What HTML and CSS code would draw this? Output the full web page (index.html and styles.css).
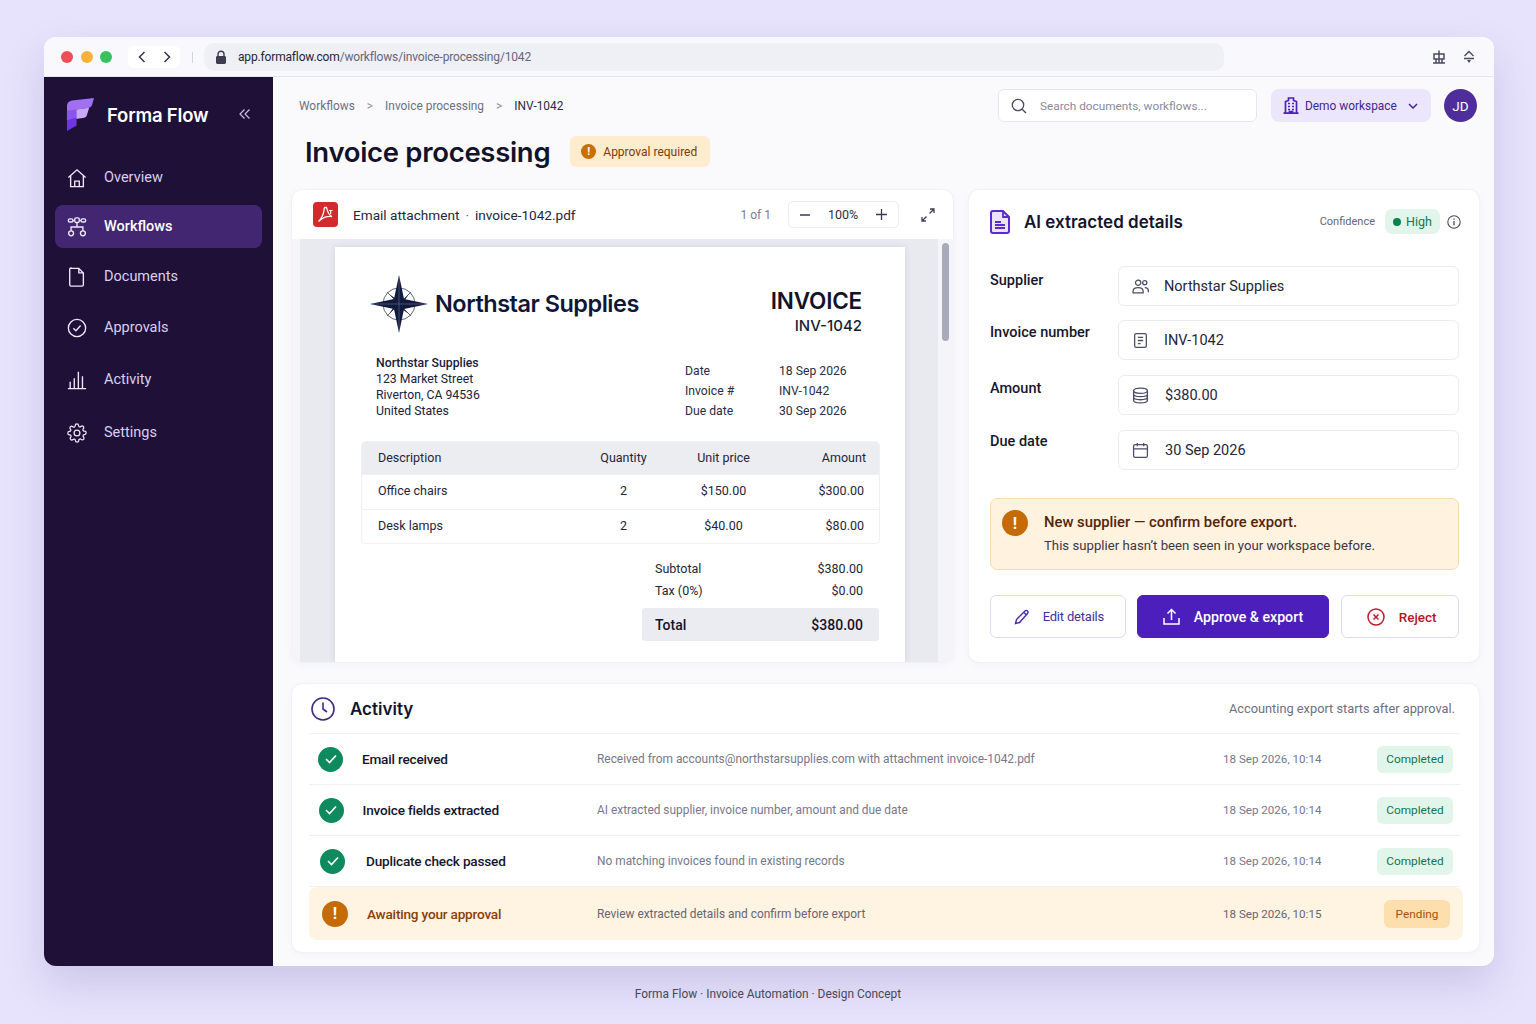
FILE: index.html
```html
<!DOCTYPE html>
<html lang="en">
<head>
<meta charset="utf-8">
<title>Forma Flow</title>
<link rel="stylesheet" href="styles.css">
</head>
<body>
<div class="window">
  <div class="titlebar">
    <div class="dots"><span class="dot red"></span><span class="dot yellow"></span><span class="dot green"></span></div>
    <div class="navbtns">
      <svg width="10" height="14" viewBox="0 0 10 14"><path d="M7.500 2 2.500 7l5 5" class="s" stroke="#34344a"/></svg>
      <svg width="10" height="14" viewBox="0 0 10 14"><path d="M2.500 2l5 5-5 5" class="s" stroke="#34344a"/></svg>
    </div>
    <span class="tb-div"></span>
    <div class="address">
      <svg width="12" height="14" viewBox="0 0 12 14"><path d="M3 6V4.200a3 3 0 0 1 6 0V6" fill="none" stroke="#3d3d52" stroke-width="1.400"/><rect x="1" y="6" width="10" height="8" rx="1.400" fill="#3d3d52"/></svg>
      <span class="url"><b>app.formaflow.com</b>/workflows/invoice-processing/1042</span>
    </div>
    <div class="tb-icons">
      <svg width="14" height="14" viewBox="0 0 14 14"><path d="M2 4h10v5H2zM7 .5V13.500M4 9v4M10 9v4M1 13h12" fill="none" stroke="#4a4a60" stroke-width="1.500"/></svg>
      <svg width="14" height="14" viewBox="0 0 14 14"><path d="M2.500 6 7 1.500 11.500 6M2 8.500h10" fill="none" stroke="#4a4a60" stroke-width="1.400"/><path d="M5 10h4l-2 3z" fill="#4a4a60"/></svg>
    </div>
  </div>
  <div class="app">
    <aside class="sidebar">
      <div class="brand">
        <svg width="29" height="33" viewBox="0 0 30 34">
          <path d="M1 8c0-3 2-5 5-5.500L29 0l-2 7c-.5 2-2 3-4 3.200L1 13z" fill="#a06ff2"/>
          <path d="M1 13l23-3-2.500 8c-.5 1.500-2 2.500-4 2.700L1 23z" fill="#c8a8f8"/>
          <path d="M1 19l10 1v8.500L1 34z" fill="#6e35e0"/>
          <path d="M1 13l10-1.300V20L1 23z" fill="#8a55ea"/>
        </svg>
        <span class="brand-name">Forma Flow</span>
        <svg class="collapse" width="12" height="12" viewBox="0 0 12 12"><path d="M5.500 1.500 1 6l4.500 4.500M10.500 1.500 6 6l4.500 4.500" fill="none" stroke="#c9bfe0" stroke-width="1.200"/></svg>
      </div>
      <nav class="nav">
        <a class="nav-item n1">
          <svg class="nav-ic" viewBox="0 0 22 22"><path d="M1.500 10.500 11 2l9.500 8.500M4 8.500v12h14v-12M8.500 20.500v-6h5v6"/></svg><span>Overview</span>
        </a>
        <a class="nav-item active n2">
          <svg class="nav-ic" viewBox="0 0 22 22"><rect x="1.500" y="2" width="5" height="3.500" rx="1.500"/><rect x="8.500" y="1" width="5" height="5" rx="1.500"/><rect x="15.500" y="2" width="5" height="3.500" rx="1.500"/><path d="M6.500 4h2M13.500 4h2M11 6v5M4.500 15.500V11h13v4.500"/><circle cx="4.500" cy="18" r="2.700"/><circle cx="17.500" cy="18" r="2.700"/></svg><span>Workflows</span>
        </a>
        <a class="nav-item n3">
          <svg class="nav-ic" viewBox="0 0 22 22"><path d="M4.500 1.500h8.500l5 5v13a1.500 1.500 0 0 1-1.500 1.500h-12a1.500 1.500 0 0 1-1.500-1.500v-17a1.500 1.500 0 0 1 1.500-1.500zM13 1.500v5h5"/></svg><span>Documents</span>
        </a>
        <a class="nav-item n4">
          <svg class="nav-ic" viewBox="0 0 22 22"><circle cx="11" cy="11" r="9.500"/><path d="M7 11.300l2.800 2.700L15 8.300"/></svg><span>Approvals</span>
        </a>
        <a class="nav-item n5">
          <svg class="nav-ic" viewBox="0 0 22 22"><path d="M1 20.500h20M3.500 20.500V13M8 20.500V9M12.500 20.500V2M17 20.500V7"/></svg><span>Activity</span>
        </a>
        <a class="nav-item n6">
          <svg class="nav-ic" viewBox="0 0 24 24"><circle cx="12" cy="12" r="3.500"/><path d="M19.400 15a1.650 1.650 0 0 0 .33 1.820l.06.06a2 2 0 1 1-2.830 2.830l-.06-.06a1.650 1.650 0 0 0-2.800 1.170V21a2 2 0 0 1-4 0v-.09a1.650 1.650 0 0 0-2.800-1.120l-.06.06a2 2 0 1 1-2.830-2.830l.06-.06a1.650 1.650 0 0 0-1.170-2.800H3a2 2 0 0 1 0-4h.09a1.650 1.650 0 0 0 1.120-2.800l-.06-.06a2 2 0 1 1 2.830-2.830l.06.06a1.650 1.650 0 0 0 2.800-1.170V3a2 2 0 0 1 4 0v.09a1.650 1.650 0 0 0 2.800 1.120l.06-.06a2 2 0 1 1 2.830 2.830l-.06.06a1.650 1.650 0 0 0 1.170 2.800H21a2 2 0 0 1 0 4h-.09a1.650 1.650 0 0 0-1.510 1z"/></svg><span>Settings</span>
        </a>
      </nav>
    </aside>
    <main class="main">
      <header class="topbar">
        <div class="crumbs"><span>Workflows</span><i>&gt;</i><span>Invoice processing</span><i>&gt;</i><span class="cur">INV-1042</span></div>
        <div class="search">
          <svg width="16" height="16" viewBox="0 0 16 16"><circle cx="7" cy="7" r="5.700" fill="none" stroke="#4a4a5e" stroke-width="1.300"/><path d="M11.200 11.200 15 15" stroke="#4a4a5e" stroke-width="1.300"/></svg>
          <span>Search documents, workflows...</span>
        </div>
        <div class="workspace">
          <svg width="16" height="17" viewBox="0 0 16 17"><path d="M2.500 16V4.500l3-1V1h5v2.500l3 1V16M0.500 16.200h15M5 6.500h2M9 6.500h2M5 9.500h2M9 9.500h2M5 12.500h2M9 12.500h2M6.500 16v-1.500h3V16" fill="none" stroke="#4a22b5" stroke-width="1.700"/></svg>
          <span>Demo workspace</span>
          <svg width="10" height="6" viewBox="0 0 10 6"><path d="M1 1l4 4 4-4" fill="none" stroke="#41268e" stroke-width="1.500"/></svg>
        </div>
        <div class="avatar">JD</div>
      </header>
      <div class="title-row">
        <h1>Invoice processing</h1>
        <div class="approval"><span class="warn-mini">!</span>Approval required</div>
      </div>
      <div class="content">
        <section class="card viewer-card">
          <div class="viewer-head">
            <span class="pdf"><svg width="17" height="17" viewBox="0 0 17 17"><path d="M1.500 15.500C4 13 6.500 9 7 4c.2-1.500 0-2.500 1-2.500h1.500C10.500 5 11 9 15 10.500 11 10 6 11 1.500 15.500z" fill="none" stroke="#fff" stroke-width="1.300"/><path d="M12 4.500h3.500M13.700 4.500V8" stroke="#fff" stroke-width="1.100"/></svg></span>
            <span class="file">Email attachment<i>·</i>invoice-1042.pdf</span>
            <span class="pages">1 of 1</span>
            <div class="zoomer">
              <svg width="10" height="10" viewBox="0 0 10 10"><path d="M0 5h10" stroke="#3a3a4e" stroke-width="1.300"/></svg>
              <span>100%</span>
              <svg width="11" height="11" viewBox="0 0 11 11"><path d="M0 5.500h11M5.500 0v11" stroke="#3a3a4e" stroke-width="1.300"/></svg>
            </div>
            <svg class="expand" width="14" height="14" viewBox="0 0 14 14"><path d="M8.500 5.500 13 1M9 1h4v4M5.500 8.500 1 13M1 9v4h4" fill="none" stroke="#3f3f58" stroke-width="1.300"/></svg>
          </div>
          <div class="viewer">
            <div class="canvas">
              <div class="page">
                <div class="doc-top">
                  <div class="logo">
                    <svg width="58" height="58" viewBox="0 0 58 58">
                      <circle cx="29" cy="29" r="16" fill="none" stroke="#5f6580" stroke-width="1"/>
                      <path d="M29 29 17 17M29 29l12-12M29 29 17 41M29 29l12 12" stroke="#5f6580" stroke-width="1"/>
                      <path d="M29 29l10-10-5.500 8zM29 29l-10 10 5.500-8zM29 29 19 19l8 5.500zM29 29l10 10-8-5.500z" fill="#111a3e"/>
                      <path d="M29 0l5 24-5 5-5-5zM29 58l-5-24 5-5 5 5zM0 29l24-5 5 5-5 5zM58 29l-24 5-5-5 5-5z" fill="#111a3e"/>
                      <path d="M29 3v52M3 29h52" stroke="#fff" stroke-width=".4" opacity=".6"/>
                    </svg>
                    <span class="logo-name">Northstar Supplies</span>
                  </div>
                  <div class="inv-head"><strong>INVOICE</strong><span>INV-1042</span></div>
                </div>
                <div class="doc-meta">
                  <div class="addr"><b>Northstar Supplies</b><span>123 Market Street</span><span>Riverton, CA 94536</span><span>United States</span></div>
                  <dl class="facts">
                    <dt>Date</dt><dd>18 Sep 2026</dd>
                    <dt>Invoice #</dt><dd>INV-1042</dd>
                    <dt>Due date</dt><dd>30 Sep 2026</dd>
                  </dl>
                </div>
                <div class="items">
                  <div class="tr th"><span>Description</span><span class="c">Quantity</span><span class="c">Unit price</span><span class="r">Amount</span></div>
                  <div class="tr"><span>Office chairs</span><span class="c">2</span><span class="c">$150.00</span><span class="r">$300.00</span></div>
                  <div class="tr last"><span>Desk lamps</span><span class="c">2</span><span class="c">$40.00</span><span class="r">$80.00</span></div>
                </div>
                <div class="totals">
                  <div class="tot"><span>Subtotal</span><span>$380.00</span></div>
                  <div class="tot"><span>Tax (0%)</span><span>$0.00</span></div>
                  <div class="tot grand"><span>Total</span><span>$380.00</span></div>
                </div>
              </div>
            </div>
            <div class="track"><div class="thumb"></div></div>
          </div>
        </section>
        <section class="card details">
          <div class="details-head">
            <svg width="20" height="24" viewBox="0 0 20 24"><path d="M3 1h10l6 6v14a2 2 0 0 1-2 2H3a2 2 0 0 1-2-2V3a2 2 0 0 1 2-2z" fill="#ece4fb" stroke="#5a2bd0" stroke-width="2"/><path d="M13 1v6h6M5 12h6M5 15h10M5 18h10" fill="none" stroke="#5a2bd0" stroke-width="1.800"/></svg>
            <h2>AI extracted details</h2>
            <span class="conf">Confidence</span>
            <span class="high"><i></i>High</span>
            <svg width="14" height="14" viewBox="0 0 14 14"><circle cx="7" cy="7" r="6.200" fill="none" stroke="#4a4a5e" stroke-width="1.100"/><path d="M7 6v4.200M7 3.500v1.300" stroke="#4a4a5e" stroke-width="1.300"/></svg>
          </div>
          <div class="fields">
            <div class="field f1"><label>Supplier</label><div class="input">
              <svg viewBox="0 0 16 16"><circle cx="5.800" cy="4.500" r="2.500"/><circle cx="12" cy="4.500" r="2"/><path d="M1 14v-1.500c0-2 2-3.500 4.800-3.500s4.700 1.500 4.700 3.500V14zM12 9c2 0 3.400 1.200 3.400 3v1.500"/></svg>
              <span>Northstar Supplies</span></div></div>
            <div class="field f2"><label>Invoice number</label><div class="input">
              <svg viewBox="0 0 16 16"><rect x="2.500" y="1.500" width="11" height="13" rx="1.500"/><path d="M5.500 5h5M5.500 8h5M5.500 11h2.500"/></svg>
              <span>INV-1042</span></div></div>
            <div class="field f3"><label>Amount</label><div class="input wide">
              <svg viewBox="0 0 16 16"><ellipse cx="8" cy="3.500" rx="6.500" ry="2.500"/><path d="M1.500 3.500v9c0 1.400 3 2.500 6.500 2.500s6.500-1.100 6.500-2.500v-9M1.500 6.500c0 1.400 3 2.500 6.500 2.500s6.500-1.100 6.500-2.500M1.500 9.500c0 1.400 3 2.500 6.500 2.500s6.500-1.100 6.500-2.500"/></svg>
              <span>$380.00</span></div></div>
            <div class="field f4"><label>Due date</label><div class="input wide">
              <svg viewBox="0 0 16 16"><rect x="1.500" y="2.500" width="13" height="12" rx="1.500"/><path d="M1.500 6.500h13M5 1v3M11 1v3"/></svg>
              <span>30 Sep 2026</span></div></div>
          </div>
          <div class="alert">
            <span class="warn big">!</span>
            <div class="alert-text"><strong>New supplier — confirm before export.</strong><span>This supplier hasn’t been seen in your workspace before.</span></div>
          </div>
          <div class="actions">
            <button class="btn edit"><svg width="16" height="16" viewBox="0 0 16 16"><path d="M1.500 14.500l1-4L11 2c.8-.8 1.800-.8 2.500 0s.8 1.700 0 2.500L5.500 13.500zM10 3.500l2.500 2.500" fill="none" stroke="#4a2aa8" stroke-width="1.400"/></svg>Edit details</button>
            <button class="btn approve"><svg width="17" height="17" viewBox="0 0 17 17"><path d="M8.500 12V1.500M4.500 5.500l4-4 4 4M1 10v6h15v-6" fill="none" stroke="#fff" stroke-width="1.500"/></svg>Approve &amp; export</button>
            <button class="btn reject"><svg width="18" height="18" viewBox="0 0 18 18"><circle cx="9" cy="9" r="8" fill="none" stroke="#c0182c" stroke-width="1.500"/><path d="M6.500 6.500l5 5M11.500 6.500l-5 5" stroke="#c0182c" stroke-width="1.500"/></svg>Reject</button>
          </div>
        </section>
      </div>
      <section class="card activity">
        <div class="act-head">
          <svg width="24" height="24" viewBox="0 0 24 24"><circle cx="12" cy="12" r="11" fill="none" stroke="#3e2a80" stroke-width="1.600"/><path d="M12 5.500V12l4 3" fill="none" stroke="#3e2a80" stroke-width="1.600"/></svg>
          <h2>Activity</h2>
          <span>Accounting export starts after approval.</span>
        </div>
        <div class="row r1">
          <div class="who"><span class="ok"><svg width="12" height="10" viewBox="0 0 12 10"><path d="M1 5l3.500 3.500L11 1.500" fill="none" stroke="#fff" stroke-width="1.600"/></svg></span><b>Email received</b></div>
          <span class="desc">Received from accounts@northstarsupplies.com with attachment invoice-1042.pdf</span>
          <span class="time">18 Sep 2026, 10:14</span>
          <span class="pill done">Completed</span>
        </div>
        <div class="row r2">
          <div class="who"><span class="ok"><svg width="12" height="10" viewBox="0 0 12 10"><path d="M1 5l3.500 3.500L11 1.500" fill="none" stroke="#fff" stroke-width="1.600"/></svg></span><b>Invoice fields extracted</b></div>
          <span class="desc">AI extracted supplier, invoice number, amount and due date</span>
          <span class="time">18 Sep 2026, 10:14</span>
          <span class="pill done">Completed</span>
        </div>
        <div class="row r3">
          <div class="who"><span class="ok"><svg width="12" height="10" viewBox="0 0 12 10"><path d="M1 5l3.500 3.500L11 1.500" fill="none" stroke="#fff" stroke-width="1.600"/></svg></span><b>Duplicate check passed</b></div>
          <span class="desc">No matching invoices found in existing records</span>
          <span class="time">18 Sep 2026, 10:14</span>
          <span class="pill done">Completed</span>
        </div>
        <div class="row r4">
          <div class="who"><span class="warn">!</span><b>Awaiting your approval</b></div>
          <span class="desc">Review extracted details and confirm before export</span>
          <span class="time">18 Sep 2026, 10:15</span>
          <span class="pill pending">Pending</span>
        </div>
      </section>
    </main>
  </div>
</div>
<footer class="foot">Forma Flow · Invoice Automation · Design Concept</footer>
</body>
</html>
```
FILE: styles.css
```css
* { box-sizing: border-box; }
html, body { margin: 0; height: 1024px; }
body {
  background: #e7e3fc;
  font-family: Roboto, "Liberation Sans", sans-serif;
  color: #15152b;
  padding: 37px 42px 0 44px;
  overflow: hidden;
}
.s { fill: none; stroke-width: 1.500; }
.window {
  width: 1450px; height: 929px;
  border-radius: 12px; overflow: hidden;
  background: #fafafd;
  box-shadow: 0 18px 40px rgba(80, 64, 140, .18);
  display: flex; flex-direction: column;
}
.titlebar {
  height: 40px; flex: none;
  background: #f9f9fd; border-bottom: 1px solid #e5e5ec;
  display: flex; align-items: center; padding: 1px 17px 0;
}
.dots { display: flex; gap: 7.500px; }
.dot { width: 12px; height: 12px; border-radius: 50%; }
.red { background: #ee4f56; } .yellow { background: #f8b23c; } .green { background: #38c25e; }
.navbtns {
  margin-left: 16px; width: 52px; height: 22px; background: #fff; border-radius: 6px;
  display: flex; align-items: center; justify-content: space-between; padding: 0 8px 0 9px;
}
.tb-div { width: 1px; height: 11px; background: #d4d4dc; margin-left: 12px; }
.address {
  margin-left: 11px; width: 1020px; height: 28px; border-radius: 10px;
  background: #efeff6; display: flex; align-items: center; padding-left: 11px; gap: 11px;
  font-size: 12px; letter-spacing: -.16px; color: #66667a;
}
.url b { font-weight: 400; color: #25253a; }
.tb-icons { margin-left: auto; margin-right: 1px; display: flex; gap: 16px; }
.app { flex: 1; display: flex; min-height: 0; }

.sidebar { width: 229px; background: #1f1037; flex: none; padding: 0 11px; }
.brand { display: flex; align-items: center; height: 70px; padding: 4px 0 0 11px; margin-bottom: 9px; position: relative; }
.brand-name { font-family: Inter, Roboto, sans-serif; font-weight: 600; font-size: 18.500px; color: #fff; margin: 1px 0 0 12px; letter-spacing: -.2px; }
.collapse { margin-left: 31px; }
.nav { display: flex; flex-direction: column; }
.nav-item {
  height: 43px; display: flex; align-items: center; gap: 17px;
  padding-left: 12px; border-radius: 8px;
  color: #d8cfee; font-size: 14.500px;
}
.nav-item.n2 { margin-top: 6px; } .nav-item.n3 { margin-top: 7px; }
.nav-item.n4 { margin-top: 8px; } .nav-item.n5 { margin-top: 9px; } .nav-item.n6 { margin-top: 10px; }
.nav-item.active { background: #432672; color: #fff; font-weight: 500; }
.nav-ic { width: 20px; height: 20px; fill: none; stroke: #eee8fa; stroke-width: 1.500; flex: none; }

.main { flex: 1; min-width: 0; padding: 12px 15px 0 19px; display: flex; flex-direction: column; }
.topbar { display: flex; align-items: center; height: 33px; }
.crumbs { display: flex; align-items: center; padding-left: 7px; font-size: 11.900px; color: #6f6f82; }
.crumbs i { font-style: normal; margin: 0 12px; font-size: 12px; color: #8f8fa0; }
.crumbs .cur { color: #2a2a3e; }
.search {
  margin-left: auto; width: 259px; height: 33px; background: #fff;
  border: 1px solid #e6e6ee; border-radius: 6px;
  display: flex; align-items: center; gap: 13px; padding-left: 12px;
  font-size: 11.800px; color: #8b8b9c;
}
.workspace {
  margin-left: 14px; width: 160px; height: 33px; background: #ece6fc; border-radius: 8px;
  display: flex; align-items: center; padding-left: 12px; gap: 6px;
  font-size: 11.900px; color: #41268e;
}
.workspace svg:last-child { margin-left: 5px; }
.avatar {
  margin-left: 13px; margin-right: 2px; width: 33px; height: 33px; border-radius: 50%;
  background: #4f2e9c; color: #fff; font-size: 13.500px;
  display: flex; align-items: center; justify-content: center;
}
.title-row { display: flex; align-items: center; height: 31px; margin-top: 14px; padding-left: 13px; }
h1 { margin: 0; font-family: Inter, Roboto, sans-serif; font-weight: 600; font-size: 27.500px; color: #12122a; letter-spacing: -.3px; }
.approval {
  margin-left: 20px; height: 31px; width: 140px; background: #fdeccd; border-radius: 6px;
  display: flex; align-items: center; padding-left: 11px; gap: 7px;
  font-size: 12px; color: #7a3d08;
}
.warn-mini {
  width: 15px; height: 15px; border-radius: 50%; background: #c96f06; color: #fff;
  font-size: 11px; font-weight: 700; display: flex; align-items: center; justify-content: center;
}
.content { display: grid; grid-template-columns: 661px 510px; gap: 16px; margin-top: 23px; height: 472px; }
.card { background: #fff; border-radius: 10px; box-shadow: 0 0 0 1px #f1f1f6, 0 2px 8px rgba(60, 60, 100, .04); overflow: hidden; }

.viewer-card { display: flex; flex-direction: column; }
.viewer-head { height: 49px; flex: none; display: flex; align-items: center; padding-left: 21px; }
.pdf { width: 25px; height: 25px; background: #d42a2c; border-radius: 4px; display: flex; align-items: center; justify-content: center; }
.file { margin-left: 15px; font-size: 13.600px; color: #25253a; }
.file i { font-style: normal; margin: 0 6px; color: #66667a; }
.pages { margin-left: auto; font-size: 12px; color: #7c7c8e; }
.zoomer {
  margin-left: 17px; width: 111px; height: 27px; border: 1px solid #ececf2; border-radius: 5px;
  display: flex; align-items: center; justify-content: space-between; padding: 0 11px;
  font-size: 12.500px; color: #2e2e42;
}
.expand { margin: 0 18px 0 22px; }
.viewer { flex: 1; display: flex; min-height: 0; background: #f5f5f9; padding-left: 8px; }
.canvas { flex: 1; background: #e9eaef; padding: 8px 33px 0 35px; overflow: hidden; }
.page { background: #fff; height: 100%; box-shadow: 0 0 6px rgba(60, 60, 90, .12); padding: 28px 43px 0 35px; }
.track { width: 15px; flex: none; padding: 4px 4px 0; }
.thumb { width: 7px; height: 98px; border-radius: 4px; background: #a9abbb; }
.doc-top { display: flex; justify-content: space-between; height: 60px; }
.logo { display: flex; align-items: center; gap: 7px; height: 58px; }
.logo-name { font-family: Inter, Roboto, sans-serif; font-weight: 600; font-size: 23.500px; color: #0f1638; letter-spacing: -.5px; margin-top: -2px; }
.inv-head { display: flex; flex-direction: column; align-items: flex-end; padding-top: 13px; }
.inv-head strong { font-family: Inter, Roboto, sans-serif; font-weight: 600; font-size: 22.500px; line-height: 26px; color: #12122a; letter-spacing: -.2px; }
.inv-head span { font-family: Inter, Roboto, sans-serif; font-weight: 500; font-size: 15px; line-height: 24px; color: #1c1c32; }
.doc-meta { display: flex; margin-top: 20px; padding-left: 6px; height: 66px; }
.addr { width: 309px; display: flex; flex-direction: column; font-size: 12.250px; line-height: 16px; color: #20203a; }
.addr b { font-weight: 500; }
.facts { margin: 6px 0 0; display: grid; grid-template-columns: 94px auto; grid-auto-rows: 20px; font-size: 12.200px; line-height: 20px; color: #2c2c42; }
.facts dd { margin: 0; }
.items { margin: 21px -17px 0 -8px; border-radius: 4px; box-shadow: 0 0 0 1px #f0f0f5; height: 101px; }
.tr { display: grid; grid-template-columns: 193px 105px 95px 1fr; align-items: center; height: 34.500px; padding: 0 15px 2px 16px; font-size: 12.500px; color: #25253a; border-top: 1px solid #f0f0f5; }
.tr.th { height: 32px; background: #ebedf1; border-top: 0; border-radius: 4px 4px 0 0; padding: 0 13px 1px 16px; }
.tr .c { text-align: center; } .tr .r { text-align: right; }
.totals { margin: 14px -17px 0 auto; width: 237px; }
.tot { display: flex; justify-content: space-between; height: 22px; align-items: center; padding: 0 16px 0 13px; font-size: 12.500px; color: #25253a; }
.tot.grand { height: 33px; margin-top: 7px; background: #ebecf1; border-radius: 3px; font-size: 14px; font-weight: 500; color: #12122a; }

.details { padding: 0 20px 0 21px; }
.details-head { height: 63px; display: flex; align-items: center; margin-right: -2px; }
.details-head h2 { margin: 0 0 0 14px; font-family: Inter, Roboto, sans-serif; font-weight: 600; font-size: 17px; color: #14142c; }
.conf { margin-left: auto; font-size: 11px; color: #66667a; }
.high {
  margin: 0 7px 0 10px; width: 55px; height: 25px; background: #e2f5ea; border-radius: 7px; color: #0f7a4c;
  display: flex; align-items: center; justify-content: center; gap: 5px; font-size: 12.500px;
}
.high i { width: 8px; height: 8px; border-radius: 50%; background: #0e8050; }
.fields { margin-top: 13px; }
.field { display: flex; height: 40px; }
.field.f2 { margin-top: 14px; } .field.f3, .field.f4 { margin-top: 15px; }
.field label { width: 128px; font-size: 14.500px; font-weight: 500; color: #16162c; padding-top: 6px; }
.field.f2 label { padding-top: 4px; } .field.f3 label { padding-top: 5px; } .field.f4 label { padding-top: 3px; }
.input {
  flex: 1; height: 40px; background: #fff; border: 1px solid #ececf2; border-radius: 6px;
  display: flex; align-items: center; padding-left: 13px; gap: 15px; font-size: 14.500px; color: #25253a;
}
.input.wide { gap: 16px; }
.input svg { width: 17px; height: 17px; fill: none; stroke: #4b4d68; stroke-width: 1.200; flex: none; }
.alert {
  margin-top: 28px; height: 72px; background: #fff3e0; border: 1px solid #f9dcae; border-radius: 7px;
  display: flex; padding: 11px 0 0 11px; gap: 16px;
}
.warn {
  width: 26px; height: 26px; border-radius: 50%; background: #c46a06; color: #fff; flex: none;
  font-size: 16px; font-weight: 700; display: flex; align-items: center; justify-content: center;
}
.alert-text { display: flex; flex-direction: column; font-size: 13.200px; color: #3e3540; padding-top: 2px; }
.alert-text strong { font-size: 14.800px; font-weight: 500; color: #55240a; line-height: 20px; margin-bottom: 6px; }
.actions { display: flex; margin-top: 25px; gap: 11px; }
.btn {
  font: inherit; font-size: 14px; height: 43px; border-radius: 6px; background: #fff;
  border: 1px solid #dcd9f6; display: flex; align-items: center; justify-content: center; gap: 12px;
  font-weight: 400; padding: 0;
}
.edit { width: 136px; color: #43309a; font-size: 13px; letter-spacing: -.2px; gap: 13px; padding-left: 2px; }
.approve { width: 193px; background: #4c1fbc; border-color: #4c1fbc; color: #fff; gap: 14px; font-size: 14.200px; font-weight: 500; }
.reject { width: 118px; margin-left: 1px; color: #b81528; font-size: 13.500px; font-weight: 500; gap: 14px; padding-left: 3px; }

.activity { margin-top: 22px; height: 268px; padding: 0 16px 0 17px; }
.act-head { height: 50px; display: flex; align-items: center; padding: 0 5px 0 2px; border-bottom: 1px solid #f0f0f5; margin-right: 3px; }
.act-head h2 { margin: 0 0 0 15px; font-family: Inter, Roboto, sans-serif; font-weight: 600; font-size: 17px; color: #14142c; }
.act-head span { margin-left: auto; font-size: 12.800px; color: #6f6f82; }
.row { display: grid; grid-template-columns: 288px 626px 1fr auto; align-items: center; height: 51px; margin-right: 3px; border-bottom: 1px solid #f0f0f5; font-size: 11.900px; }
.who { display: flex; align-items: center; gap: 19px; padding-left: 9px; }
.who b { font-size: 13.600px; font-weight: 500; letter-spacing: -.2px; color: #15152c; }
.r2 .who { padding-left: 9.500px; } .r3 .who { padding-left: 11px; gap: 21px; }
.ok { width: 25px; height: 25px; border-radius: 50%; background: #0f8a5f; display: flex; align-items: center; justify-content: center; flex: none; }
.desc { color: #77778a; }
.time { color: #77778a; font-size: 11.600px; }
.pill { height: 27px; border-radius: 6px; display: flex; align-items: center; justify-content: center; font-size: 11.800px; }
.done { width: 76px; background: #e2f5ea; color: #0f7550; margin-right: 7px; }
.r4 { height: 53px; margin: 0; border: 0; border-radius: 8px; background: #fff3e2; }
.r4 .who { padding-left: 13px; gap: 19px; }
.r4 .who b { color: #8a3f04; }
.r4 .desc, .r4 .time { color: #6a6470; }
.pending { width: 66px; height: 28px; background: #fddfae; color: #a8510a; margin-right: 13px; }
.foot { margin-top: 21px; margin-right: -42px; margin-left: -44px; text-align: center; font-size: 11.900px; color: #474759; }
```
